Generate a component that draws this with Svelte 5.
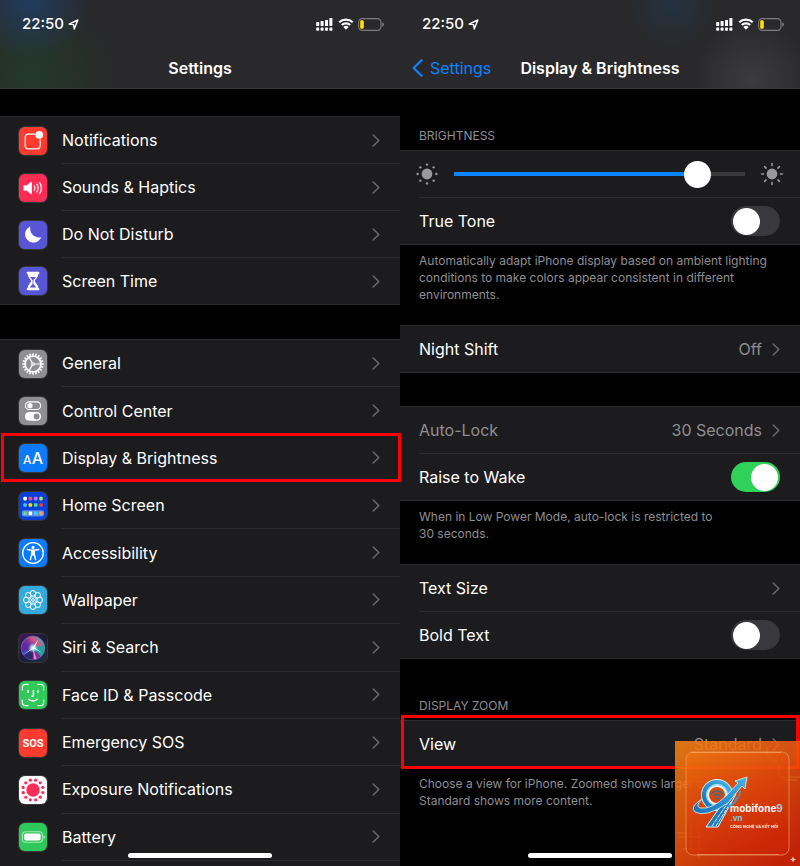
<script lang="ts">
  type Item = {
    icon: string;
    label: string;
    color: string;
    marked?: boolean;
  };

  const alerts: Item[] = [
    { icon: 'notifications', label: 'Notifications', color: '#ff3b30' },
    { icon: 'sounds', label: 'Sounds & Haptics', color: '#ff2d55' },
    { icon: 'moon', label: 'Do Not Disturb', color: '#5856d6' },
    { icon: 'hourglass', label: 'Screen Time', color: '#5856d6' },
  ];

  const device: Item[] = [
    { icon: 'gear', label: 'General', color: '#8e8e93' },
    { icon: 'controls', label: 'Control Center', color: '#8e8e93' },
    { icon: 'aa', label: 'Display & Brightness', color: '#0a7aff', marked: true },
    { icon: 'home', label: 'Home Screen', color: '#0a41d8' },
    { icon: 'accessibility', label: 'Accessibility', color: '#0a7aff' },
    { icon: 'wallpaper', label: 'Wallpaper', color: '#34aadc' },
    { icon: 'siri', label: 'Siri & Search', color: '#1c1b3a' },
    { icon: 'face', label: 'Face ID & Passcode', color: '#30c85a' },
    { icon: 'sos', label: 'Emergency SOS', color: '#ff3b30' },
    { icon: 'exposure', label: 'Exposure Notifications', color: '#ffffff' },
    { icon: 'battery', label: 'Battery', color: '#30c85a' },
  ];

  const apps = ['#ffffff', '#ff4f5e', '#c86bff', '#b6e34a', '#35c8ff', '#ffd60a', '#4be08a', '#ff3b30'];
  const dock = ['#5ee07a', '#ffffff', '#3ecbff', '#ff9f43'];

  function ring(count: number, radius: number, start = 0) {
    return Array.from({ length: count }, (_, i) => {
      const a = start + (i * 2 * Math.PI) / count;
      return { x: Math.cos(a) * radius, y: Math.sin(a) * radius, deg: (a * 180) / Math.PI };
    });
  }

  let brightness = 87;
  let trueTone = false;
  let raiseToWake = true;
  let boldText = false;

  // the fill ends under the middle of the 27px thumb
  $: fill = `calc(13px + (100% - 27px) * ${brightness / 100})`;
</script>

{#snippet chevron()}
  <svg class="chevron" viewBox="0 0 8 13" aria-hidden="true">
    <path d="M1.2 1 L6.8 6.5 L1.2 12" />
  </svg>
{/snippet}

{#snippet statusBar()}
  <div class="status">
    <span class="time">22:50</span>
    <svg class="location" viewBox="0 0 11 11" aria-hidden="true">
      <path d="M9.9 1 L6.2 10 L5.6 5.6 L1.1 5.1 Z" />
    </svg>
    <svg class="signal" viewBox="0 0 17 13" aria-hidden="true">
      {#each [4, 3, 2, 0] as top, i}
        <rect x={i * 4.4 + 0.2} y={top} width="3" height={8 - top} rx="0.6" />
        <rect x={i * 4.4 + 0.2} y="9.6" width="3" height="3.2" rx="0.8" />
      {/each}
    </svg>
    <svg class="wifi" viewBox="0 0 16 12" aria-hidden="true">
      <path d="M1.2 4.3 A9.8 9.8 0 0 1 14.8 4.3" />
      <path d="M3.8 7 A6 6 0 0 1 12.2 7" />
      <path class="solid" d="M8 11.7 L5.4 9 A3.8 3.8 0 0 1 10.6 9 Z" />
    </svg>
    <svg class="cell" viewBox="0 0 26 13" aria-hidden="true">
      <rect class="shell" x="0.6" y="0.6" width="22.4" height="11.8" rx="3.6" />
      <rect class="charge" x="2.2" y="2.3" width="3.6" height="8.4" rx="1.2" />
      <path class="cap" d="M24.2 4.3 Q26 5 26 6.5 Q26 8 24.2 8.7 Z" />
    </svg>
  </div>
{/snippet}

{#snippet glyph(name: string)}
  <svg viewBox="0 0 28 28" aria-hidden="true">
    {#if name === 'notifications'}
      <path class="line" d="M15.4 7.2 H9.5 Q6.2 7.2 6.2 10.5 V18.6 Q6.2 21.9 9.5 21.9 H17.8 Q21.1 21.9 21.1 18.6 V12.8" />
      <circle cx="20.2" cy="7.8" r="3.9" fill="#fff" />
    {:else if name === 'sounds'}
      <path d="M4.4 11.6 H7.4 L11.8 8 Q12.9 7.4 12.9 8.7 V19.3 Q12.9 20.6 11.8 20 L7.4 16.6 H4.4 Z" fill="#fff" />
      <path class="line" d="M15.3 12 Q16.8 14 15.3 16.2 M17.8 10.2 Q20.5 14 17.8 18 M20.4 8.3 Q24.5 14 20.4 19.8" />
    {:else if name === 'moon'}
      <path d="M11 5.9 A8.1 8.1 0 1 0 21.8 16.6 A9.2 9.2 0 0 1 11 5.9 Z" fill="#fff" stroke="#fff" stroke-width="0.5" stroke-linejoin="round" />
    {:else if name === 'hourglass'}
      <path
        d="M8.6 4.8 H19.4 Q20.4 4.8 20.4 5.9 Q20.4 7 19.2 7.2 C19.2 10.6 15.9 12.2 15.9 14 C15.9 15.8 19.2 17.4 19.2 20.8 Q20.4 21 20.4 22.1 Q20.4 23.2 19.4 23.2 H8.6 Q7.6 23.2 7.6 22.1 Q7.6 21 8.8 20.8 C8.8 17.4 12.1 15.8 12.1 14 C12.1 12.2 8.8 10.6 8.8 7.2 Q7.6 7 7.6 5.9 Q7.6 4.8 8.6 4.8 Z"
        fill="#fff"
      />
      <path d="M11 10 H17 L14.4 13 V17 L17.4 20.6 H10.6 L13.6 17 V13 Z" fill="#5856d6" />
    {:else if name === 'gear'}
      <g transform="translate(14 14)">
        {#each ring(20, 9.6) as t}
          <rect x="-1.3" y="-0.8" width="2.4" height="1.6" fill="#fff" transform="translate({t.x} {t.y}) rotate({t.deg})" />
        {/each}
        <circle r="7.9" fill="none" stroke="#fff" stroke-width="1.7" />
        <circle r="1.3" fill="none" stroke="#fff" stroke-width="1.1" />
        <path class="line" d="M1.4 0 H7.6 M-0.8 -1.3 L-3.9 -6.6 M-0.8 1.3 L-3.9 6.6" />
      </g>
    {:else if name === 'controls'}
      <rect x="6.4" y="4.9" width="15.2" height="7.6" rx="3.8" fill="none" stroke="#fff" stroke-width="1.2" />
      <circle cx="11" cy="8.7" r="2.6" fill="#fff" />
      <rect x="5.9" y="15" width="16.2" height="8.8" rx="4.4" fill="#fff" />
      <circle cx="17.6" cy="19.4" r="3" fill="#8e8e93" />
    {:else if name === 'aa'}
      <text x="4" y="19.8" font-size="12" font-weight="500" fill="#fff">A</text>
      <text x="12.7" y="19.8" font-size="16" font-weight="500" fill="#fff">A</text>
    {:else if name === 'home'}
      {#each apps as c, i}
        <rect x={4.3 + (i % 4) * 5.3} y={4.8 + Math.floor(i / 4) * 6.4} width="3.6" height="3.6" rx="1.1" fill={c} />
      {/each}
      <rect x="2.9" y="18.3" width="22.2" height="6.2" rx="1.8" fill="#5b8cf0" />
      {#each dock as c, i}
        <rect x={4.3 + i * 5.3} y="19.6" width="3.6" height="3.6" rx="1.1" fill={c} />
      {/each}
    {:else if name === 'accessibility'}
      <circle cx="14" cy="14" r="10.3" fill="none" stroke="#fff" stroke-width="1.3" />
      <circle cx="14" cy="8.4" r="1.6" fill="#fff" />
      <path
        d="M8.3 10.6 L12.6 11.3 H15.4 L19.7 10.6 M14 11.6 V16 M12.7 11.8 V15.4 L11.4 20.6 M15.3 11.8 V15.4 L16.6 20.6"
        fill="none"
        stroke="#fff"
        stroke-width="1.5"
        stroke-linecap="round"
      />
    {:else if name === 'wallpaper'}
      <g transform="translate(14 14)" fill="none" stroke="#fff" stroke-width="1">
        {#each ring(8, 6.7) as p}
          <circle cx={p.x} cy={p.y} r="2.8" />
        {/each}
        {#each ring(8, 3.2, 0.39) as p}
          <circle cx={p.x} cy={p.y} r="0.8" fill="#fff" stroke="none" />
        {/each}
        <circle r="1.4" />
      </g>
    {:else if name === 'siri'}
      <defs>
        <linearGradient id="siri-bg" x1="0" y1="0" x2="1" y2="1">
          <stop offset="0" stop-color="#46165f" />
          <stop offset="0.55" stop-color="#1c1b3a" />
          <stop offset="1" stop-color="#202f45" />
        </linearGradient>
        <linearGradient id="siri-orb" x1="0.1" y1="0.8" x2="0.9" y2="0.1">
          <stop offset="0" stop-color="#3355cf" />
          <stop offset="0.45" stop-color="#782f98" />
          <stop offset="0.7" stop-color="#d94f89" />
          <stop offset="1" stop-color="#35afa9" />
        </linearGradient>
        <radialGradient id="siri-core">
          <stop offset="0" stop-color="#fff" />
          <stop offset="0.35" stop-color="#d8ffff" stop-opacity="0.8" />
          <stop offset="1" stop-color="#7be9e4" stop-opacity="0" />
        </radialGradient>
      </defs>
      <rect width="28" height="28" fill="url(#siri-bg)" />
      <circle cx="14" cy="14" r="11.8" fill="url(#siri-orb)" stroke="#807eac" stroke-width="0.7" />
      <path d="M14 14 L25.4 11 Q26.6 17 22 22.4 Z" fill="#1fa29c" />
      <path d="M14 14 L17.8 25 Q10 27 5 21.6 Z" fill="#30256f" />
      <path d="M14 14 L2.6 18 Q2 12 4.8 8 Z" fill="#5c2ba0" />
      <path d="M14 14 L17.8 25 L14.6 25.6 Z" fill="#ff73c8" />
      <path d="M14.6 13.2 L4.6 20.8 L13 15.6 Z M14 14 L23 18.8 L15.6 13.5 Z M13 14.4 L19.3 5.6 L15.5 14.2 Z" fill="#dcfff9" />
      <circle cx="14" cy="14" r="5.2" fill="url(#siri-core)" />
    {:else if name === 'face'}
      <path
        class="line"
        d="M3.4 9 V6.6 Q3.4 3.4 6.6 3.4 H9 M19 3.4 H21.4 Q24.6 3.4 24.6 6.6 V9 M24.6 19 V21.4 Q24.6 24.6 21.4 24.6 H19 M9 24.6 H6.6 Q3.4 24.6 3.4 21.4 V19"
      />
      <path
        d="M9.1 9.4 V11.4 M18.9 9.4 V11.4 M14.4 9.6 V14.2 Q14.4 15.5 12.8 15.3 M9.8 18.2 Q14 21.8 18.2 18.2"
        fill="none"
        stroke="#fff"
        stroke-width="1.5"
        stroke-linecap="round"
      />
    {:else if name === 'sos'}
      <text class="sos" x="14" y="18" text-anchor="middle" font-size="11" fill="#fff">SOS</text>
    {:else if name === 'exposure'}
      <g transform="translate(14 14)" fill="#ff2d55">
        <circle r="6.7" />
        {#each ring(12, 10.2, 0.26) as p}
          <circle cx={p.x} cy={p.y} r="1.6" />
        {/each}
      </g>
    {:else if name === 'battery'}
      <rect x="3.4" y="8.8" width="20" height="10.4" rx="3.2" fill="none" stroke="#a8e8ba" stroke-width="1.1" />
      <rect x="5.2" y="10.6" width="16.4" height="6.8" rx="1.6" fill="#fff" />
      <path d="M24.6 12.2 Q26.2 12.8 26.2 14 Q26.2 15.2 24.6 15.8 Z" fill="#a8e8ba" />
    {/if}
  </svg>
{/snippet}

{#snippet menu(items: Item[])}
  {#each items as item}
    <a class="row" class:marked={item.marked} href="#{item.icon}">
      <span class="icon" style="background-color: {item.color}">{@render glyph(item.icon)}</span>
      <span class="body">
        <span class="label">{item.label}</span>
        {@render chevron()}
      </span>
    </a>
  {/each}
{/snippet}

<main class="screens">
  <section class="phone">
    <header class="top top-main">
      {@render statusBar()}
      <div class="titlebar"><h1>Settings</h1></div>
    </header>
    <nav class="menus">
      <div class="group">{@render menu(alerts)}</div>
      <div class="group fill">{@render menu(device)}</div>
    </nav>
    <div class="indicator"></div>
  </section>

  <section class="phone detail">
    <header class="top top-detail">
      {@render statusBar()}
      <div class="titlebar">
        <a class="back" href="#settings">
          <svg viewBox="0 0 11 18" aria-hidden="true"><path d="M9.6 1.2 L1.6 9 L9.6 16.8" /></svg>
          Settings
        </a>
        <h1>Display &amp; Brightness</h1>
      </div>
    </header>

    <h2>BRIGHTNESS</h2>
    <div class="group">
      <div class="row">
        <div class="body slider">
          <svg class="sun low" viewBox="0 0 24 24" aria-hidden="true">
            <g transform="translate(12 12)">
              <circle r="5.4" />
              {#each ring(8, 9.4) as p}
                <circle cx={p.x} cy={p.y} r="1.2" />
              {/each}
            </g>
          </svg>
          <input
            class="range"
            type="range"
            min="0"
            max="100"
            aria-label="Brightness"
            bind:value={brightness}
            style="--fill: {fill}"
          />
          <svg class="sun" viewBox="0 0 24 24" aria-hidden="true">
            <g transform="translate(12 12)">
              <circle r="5.4" />
              {#each ring(8, 9.4) as p}
                <rect x="-1.8" y="-0.8" width="3.6" height="1.6" rx="0.8" transform="translate({p.x} {p.y}) rotate({p.deg})" />
              {/each}
            </g>
          </svg>
        </div>
      </div>
      <label class="row">
        <span class="body">
          <span class="label">True Tone</span>
          <input class="switch" type="checkbox" bind:checked={trueTone} />
        </span>
      </label>
    </div>
    <p class="note">
      Automatically adapt iPhone display based on ambient lighting conditions to make colors appear consistent in
      different environments.
    </p>

    <div class="group">
      <a class="row" href="#night-shift">
        <span class="body">
          <span class="label">Night Shift</span>
          <span class="value">Off</span>
          {@render chevron()}
        </span>
      </a>
    </div>

    <div class="group spaced">
      <a class="row" href="#auto-lock">
        <span class="body">
          <span class="label muted">Auto-Lock</span>
          <span class="value">30 Seconds</span>
          {@render chevron()}
        </span>
      </a>
      <label class="row">
        <span class="body">
          <span class="label">Raise to Wake</span>
          <input class="switch" type="checkbox" bind:checked={raiseToWake} />
        </span>
      </label>
    </div>
    <p class="note">When in Low Power Mode, auto-lock is restricted to<br />30 seconds.</p>

    <div class="group">
      <a class="row" href="#text-size">
        <span class="body">
          <span class="label">Text Size</span>
          {@render chevron()}
        </span>
      </a>
      <label class="row">
        <span class="body">
          <span class="label">Bold Text</span>
          <input class="switch" type="checkbox" bind:checked={boldText} />
        </span>
      </label>
    </div>

    <h2>DISPLAY ZOOM</h2>
    <div class="group">
      <a class="row marked" href="#view">
        <span class="body">
          <span class="label">View</span>
          <span class="value">Standard</span>
          {@render chevron()}
        </span>
      </a>
    </div>
    <p class="note">Choose a view for iPhone. Zoomed shows larger controls. Standard shows more content.</p>
    <div class="indicator"></div>

    <svg class="watermark" viewBox="0 0 125 125" role="img" aria-label="mobifone9.vn">
      <defs>
        <linearGradient id="wm-bg" x1="0" y1="0" x2="0.8" y2="1">
          <stop offset="0" stop-color="#fb8412" />
          <stop offset="0.5" stop-color="#f2580e" />
          <stop offset="1" stop-color="#e0280a" />
        </linearGradient>
        <linearGradient id="wm-card" x1="0" y1="0" x2="0.3" y2="1">
          <stop offset="0" stop-color="#f4760d" />
          <stop offset="0.4" stop-color="#e2460a" />
          <stop offset="1" stop-color="#d02406" />
        </linearGradient>
        <linearGradient id="wm-blue" x1="0" y1="1" x2="1" y2="0">
          <stop offset="0" stop-color="#1473b8" />
          <stop offset="1" stop-color="#43b4e6" />
        </linearGradient>
      </defs>
      <rect width="125" height="125" fill="url(#wm-bg)" opacity="0.86" />
      <path
        d="M0 92 H14 M3 96 H24 M8 108 H30 M16 84 V112 M24 90 V118 M105 36 H125 M108 39 H122 M98 16 L104 24 V34 M92 6 V14 L100 22"
        fill="none"
        stroke="#f5a53a"
        stroke-width="0.7"
        opacity="0.45"
      />
      <rect x="11" y="11" width="103" height="103" rx="7" fill="url(#wm-card)" opacity="0.6" />
      <rect x="11" y="11" width="103" height="103" rx="7" fill="none" stroke="#f39a5c" stroke-width="1" opacity="0.7" />
      <path d="M16 11.5 H106 M22 113.5 H104" stroke="#ffc48c" stroke-width="0.9" opacity="0.5" />

      <circle cx="42" cy="54" r="12" fill="none" stroke="#e3f4fb" stroke-width="8" />
      <circle cx="42" cy="54" r="12.6" fill="none" stroke="url(#wm-blue)" stroke-width="5" />
      <circle cx="42" cy="54" r="10.6" fill="none" stroke="#d9f1fa" stroke-width="0.8" />
      <path d="M31 86 L45 66 Q53 58 57 50 L61 53 L43 86 Z" fill="#1d7bbd" stroke="#e3f4fb" stroke-width="1" />
      <path d="M37 85 L52 63 M41 85 L56 61" fill="none" stroke="#d9f1fa" stroke-width="1" stroke-dasharray="4 1" />
      <path
        d="M27 58 Q14 66 20 71 Q31 77 53 62 L67 45 L70 48 L72 36 L60 40 L63 42 L52 54 Q37 69 25 67 Q20 65 27 58 Z"
        fill="url(#wm-blue)"
        stroke="#e3f4fb"
        stroke-width="0.8"
      />
      <path d="M60 59 Q66 55 65 50 M53 66 Q61 62 62 57" fill="none" stroke="#3a9fd2" stroke-width="1.6" />
      <path d="M36 53 Q42 47 48 53 M38 55.5 Q42 51.5 46 55.5 M40.2 57.8 Q42 56 43.8 57.8" fill="none" stroke="#32728f" stroke-width="1.4" />

      <g class="brand">
        <text x="55" y="71" font-size="10" fill="#f5f5f5">mobifone<tspan fill="#a9c8d8">9</tspan></text>
        <text x="55" y="80" font-size="8" fill="#8fc0dc">.vn</text>
        <text x="55" y="87" font-size="4" fill="#fbe3da">CÔNG NGHỆ VÀ KẾT NỐI</text>
      </g>
      <path d="M118 115.5 L119 117.5 L121 118.5 L119 119.5 L118 121.5 L117 119.5 L115 118.5 L117 117.5 Z" fill="#f4b9a4" />
    </svg>
  </section>
</main>

<style>
  :global(body) {
    margin: 0;
    background: #000;
  }

  .screens {
    display: grid;
    grid-template-columns: 1fr 1fr;
    min-height: 100vh;
    overflow: hidden;
    background: #000;
    color: #fff;
    font-family: Inter, Roboto, sans-serif;
    font-size: 16px;
    line-height: 20px;
  }

  .phone {
    position: relative;
    display: flex;
    flex-direction: column;
    min-width: 0;
  }

  .top {
    box-sizing: border-box;
    height: 89px;
    border-bottom: 1px solid #3a3a3c;
    background-color: #29292b;
  }

  .top-main {
    background-image:
      radial-gradient(circle at 30px 0, rgba(31, 64, 108, 0.8), transparent 60px),
      radial-gradient(ellipse 90px 80px at 30px 76px, rgba(34, 58, 40, 0.9), transparent);
  }

  .top-detail {
    background-image:
      radial-gradient(circle at 272px 4px, rgba(35, 52, 70, 0.8), transparent 45px),
      radial-gradient(circle at 352px 80px, rgba(62, 62, 64, 0.9), transparent 60px);
  }

  .status {
    display: flex;
    align-items: center;
    height: 48px;
    padding: 0 16px 0 22px;
  }

  .time {
    font-size: 15px;
    font-weight: 500;
  }

  .location {
    width: 11px;
    height: 11px;
    margin: 0 auto 0 4px;
    fill: none;
    stroke: #fff;
    stroke-width: 1.4;
    stroke-linejoin: round;
  }

  .signal {
    width: 17px;
    height: 13px;
    margin-right: 5px;
    fill: #fff;
  }

  .wifi {
    width: 16px;
    height: 12px;
    margin-right: 4px;
    fill: none;
    stroke: #fff;
    stroke-width: 2.2;
  }

  .wifi .solid {
    fill: #fff;
    stroke: none;
  }

  .cell {
    width: 26px;
    height: 13px;
  }

  .shell {
    fill: none;
    stroke: #7c7c7f;
    stroke-width: 1.1;
  }

  .charge {
    fill: #ffe000;
  }

  .cap {
    fill: #7c7c7f;
  }

  .titlebar {
    display: grid;
    grid-template-columns: 1fr auto 1fr;
    align-items: center;
    height: 40px;
    padding: 0 12px;
  }

  h1 {
    grid-column: 2;
    margin: 0;
    font-size: 16px;
    font-weight: 600;
  }

  .back {
    display: flex;
    align-items: center;
    gap: 7px;
    color: #0a84ff;
    text-decoration: none;
  }

  .back svg {
    width: 11px;
    height: 18px;
    fill: none;
    stroke: #0a84ff;
    stroke-width: 2.2;
    stroke-linecap: round;
    stroke-linejoin: round;
  }

  .menus {
    display: flex;
    flex: 1;
    flex-direction: column;
    gap: 34px;
    padding-top: 27px;
  }

  .group {
    border-top: 1px solid #2c2c2e;
    border-bottom: 1px solid #2c2c2e;
    background: #1c1c1e;
  }

  .group.fill {
    display: flex;
    flex: 1;
    flex-direction: column;
    padding-bottom: 5px;
    border-bottom: 0;
  }

  .fill .row {
    flex: 1;
  }

  .spaced {
    margin-top: 33px;
  }

  .row {
    position: relative;
    display: flex;
    align-items: center;
    min-height: 47px;
    padding-left: 19px;
    color: #fff;
    text-decoration: none;
  }

  .row:last-child {
    min-height: 46px;
  }

  .marked::after {
    content: '';
    position: absolute;
    inset: -2px -1px 0 1px;
    z-index: 1;
    border: 3px solid #f00;
  }

  .detail .marked::after {
    inset: -6px 1px -2px;
  }

  .icon {
    display: flex;
    flex: none;
    width: 28px;
    height: 28px;
    margin-right: 15px;
    border-radius: 6px;
    box-shadow: 0 0 0 1px rgba(255, 255, 255, 0.12);
    overflow: hidden;
  }

  .icon svg {
    width: 28px;
    height: 28px;
  }

  .line {
    fill: none;
    stroke: #fff;
    stroke-width: 1.2;
    stroke-linecap: round;
  }

  .sos {
    font-family: Roboto, sans-serif;
    font-weight: 700;
  }

  .body {
    box-sizing: border-box;
    display: flex;
    flex: 1;
    align-items: center;
    align-self: stretch;
    padding-right: 20px;
    border-bottom: 1px solid #2c2c2e;
  }

  .group:not(.fill) .row:last-child .body {
    border-bottom: 0;
  }

  .label {
    flex: 1;
  }

  .muted,
  .value {
    color: #8e8e93;
  }

  .value {
    margin-right: 10px;
  }

  .chevron {
    width: 8px;
    height: 13px;
    fill: none;
    stroke: #68686c;
    stroke-width: 1.6;
    stroke-linecap: round;
    stroke-linejoin: round;
  }

  .slider {
    gap: 15px;
    padding-right: 16px;
  }

  .sun {
    flex: none;
    width: 24px;
    height: 24px;
    fill: #98989d;
  }

  .sun.low {
    margin-left: -4px;
  }

  .range {
    flex: 1;
    min-width: 0;
    height: 27px;
    margin: 0;
    appearance: none;
    background:
      linear-gradient(#0a84ff, #0a84ff) left center / var(--fill) 4px no-repeat,
      linear-gradient(#3a3a3c, #3a3a3c) center / 100% 4px no-repeat;
  }

  .range::-webkit-slider-thumb {
    width: 27px;
    height: 27px;
    appearance: none;
    border-radius: 50%;
    background: #fff;
  }

  .switch {
    display: flex;
    align-items: center;
    width: 49px;
    height: 30px;
    margin: 0;
    padding: 0 2px;
    box-sizing: border-box;
    appearance: none;
    border-radius: 15px;
    background: #39393d;
  }

  .switch::before {
    content: '';
    width: 27px;
    height: 27px;
    border-radius: 50%;
    background: #fff;
  }

  .switch:checked {
    background: #30d158;
  }

  .switch:checked::before {
    margin-left: auto;
  }

  h2 {
    margin: 0;
    padding: 39px 19px 6px;
    color: #8e8e93;
    font-size: 12px;
    font-weight: 400;
    line-height: 16px;
  }

  .note {
    margin: 0;
    padding: 7px 19px 22px;
    color: #8e8e93;
    font-size: 12px;
    line-height: 17px;
  }

  .indicator {
    position: absolute;
    bottom: 8px;
    left: 32%;
    width: 36%;
    height: 5px;
    border-radius: 3px;
    background: #fff;
  }

  .watermark {
    position: absolute;
    right: 0;
    bottom: 0;
    z-index: 2;
    width: 125px;
    height: 125px;
  }

  .brand {
    font-weight: 700;
  }
</style>
